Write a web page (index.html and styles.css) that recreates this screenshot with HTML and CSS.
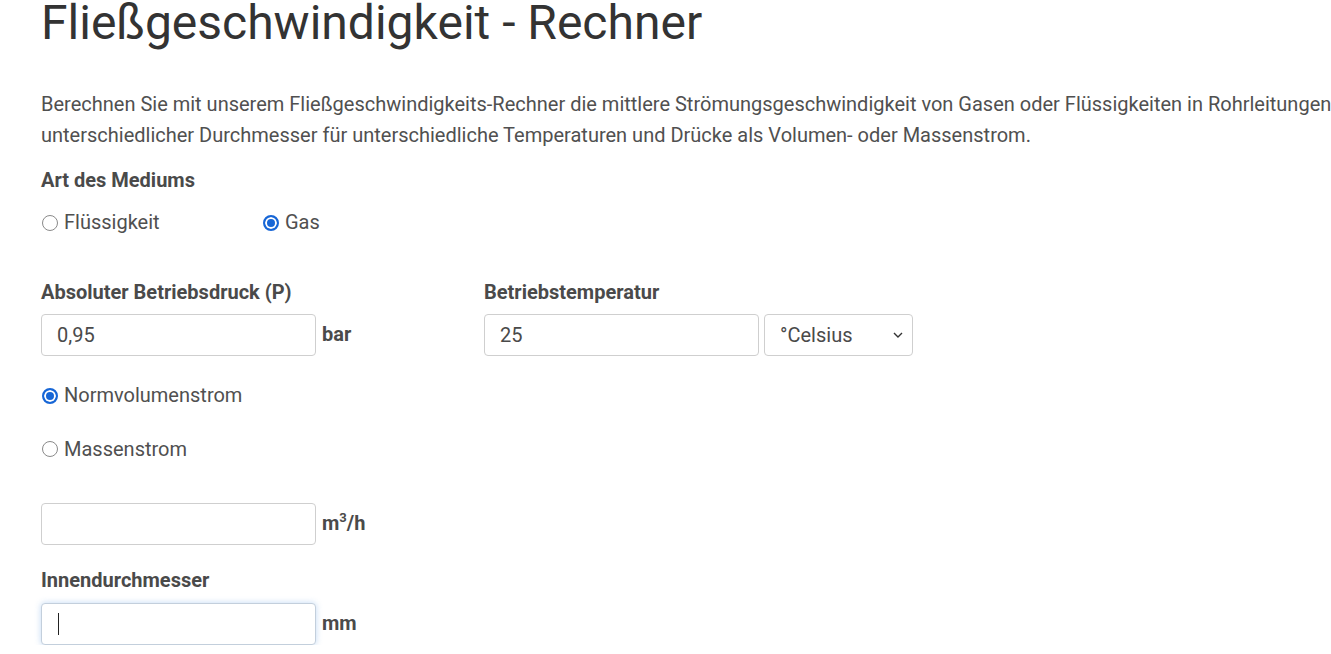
FILE: index.html
```html
<!DOCTYPE html>
<html lang="de">
<head>
  <meta charset="UTF-8">
  <meta name="viewport" content="width=device-width, initial-scale=1.0">
  <title>Fließgeschwindigkeit - Rechner</title>
  <link rel="stylesheet" href="styles.css">
</head>
<body>
  <div class="page">
    <h1>Fließgeschwindigkeit - Rechner</h1>
    <p class="intro">Berechnen Sie mit unserem Fließgeschwindigkeits-Rechner die mittlere Strömungsgeschwindigkeit von Gasen oder Flüssigkeiten in Rohrleitungen unterschiedlicher Durchmesser für unterschiedliche Temperaturen und Drücke als Volumen- oder Massenstrom.</p>

    <form class="calc">
      <div class="label medium-label">Art des Mediums</div>
      <div class="radio-row">
        <label class="radio radio-wide"><input type="radio" name="medium"> Flüssigkeit</label>
        <label class="radio"><input type="radio" name="medium" checked> Gas</label>
      </div>

      <div class="two-cols">
        <div class="field">
          <div class="label">Absoluter Betriebsdruck (P)</div>
          <div class="input-line">
            <input type="text" class="text-input" value="0,95">
            <span class="unit">bar</span>
          </div>
        </div>
        <div class="field">
          <div class="label">Betriebstemperatur</div>
          <div class="input-line">
            <input type="text" class="text-input" value="25">
            <div class="select-wrap">
              <select class="select">
                <option>°Celsius</option>
                <option>Kelvin</option>
              </select>
              <svg class="chevron" width="10" height="6" viewBox="0 0 10 6"><path d="M1 1l4 4 4-4" fill="none" stroke="#333" stroke-width="1.4"/></svg>
            </div>
          </div>
        </div>
      </div>

      <label class="radio radio-line first-flow"><input type="radio" name="flow" checked> Normvolumenstrom</label>
      <label class="radio radio-line"><input type="radio" name="flow"> Massenstrom</label>

      <div class="input-line flow-input">
        <input type="text" class="text-input">
        <span class="unit">m<sup>3</sup>/h</span>
      </div>

      <div class="label diameter-label">Innendurchmesser</div>
      <div class="input-line">
        <div class="focus-wrap">
          <input type="text" class="text-input focused">
          <span class="caret"></span>
        </div>
        <span class="unit">mm</span>
      </div>
    </form>
  </div>
</body>
</html>
```

FILE: styles.css
```css
/* Styles globaux */
body {
  margin: 0;
  padding: 0;
  background: #fff;
  font-family: Roboto, "Open Sans", Arial, sans-serif;
  font-size: 20px;
  line-height: 31.5px;
  color: #505050;
  overflow: hidden;
}

.page {
  padding-left: 41px;
  width: 1320px;
}

h1 {
  margin: -6px 0 0;
  font-size: 48px;
  font-weight: 400;
  line-height: 1.2;
  color: #333;
}

.intro {
  margin: 37px 0 0;
  width: 1300px;
}

.label {
  font-weight: 700;
  color: #4a4a4a;
}

.medium-label {
  margin-top: 13px;
}

.radio-row {
  display: flex;
  margin-top: 11px;
}

.radio {
  display: flex;
  align-items: center;
  gap: 6px;
}

.radio-wide {
  width: 221px;
}

.radio input {
  appearance: none;
  -webkit-appearance: none;
  box-sizing: border-box;
  width: 16px;
  height: 16px;
  margin: 0 0 0 1px;
  border: 1px solid #8a8a8a;
  border-radius: 50%;
  background: #fff;
}

.radio input:checked {
  border: 2px solid #1766d6;
  background: #1766d6;
  box-shadow: inset 0 0 0 2px #fff;
}

.two-cols {
  display: grid;
  grid-template-columns: 443px 443px;
  margin-top: 38px;
}

.input-line {
  display: flex;
  align-items: center;
  margin-top: 6px;
}

.text-input {
  box-sizing: border-box;
  width: 275px;
  height: 42px;
  padding: 0 15px;
  border: 1px solid #cfcfcf;
  border-radius: 4px;
  font-family: inherit;
  font-size: 20px;
  color: #4a4a4a;
  outline: none;
}

.unit {
  margin-left: 6px;
  font-weight: 700;
  color: #4a4a4a;
}

.unit sup {
  font-size: 13px;
  line-height: 0;
}

.select-wrap {
  position: relative;
  margin-left: 5px;
}

.select {
  appearance: none;
  -webkit-appearance: none;
  box-sizing: border-box;
  width: 149px;
  height: 42px;
  padding: 0 15px;
  border: 1px solid #cfcfcf;
  border-radius: 4px;
  background: #fff;
  font-family: inherit;
  font-size: 20px;
  color: #4a4a4a;
}

.chevron {
  position: absolute;
  right: 10px;
  top: 18px;
}

.first-flow {
  margin-top: 24px;
}

.radio-line + .radio-line {
  margin-top: 22px;
}

.flow-input {
  margin-top: 38px;
}

.diameter-label {
  margin-top: 20px;
}

.focus-wrap {
  position: relative;
}

.text-input.focused {
  border-color: #c3cfdc;
  box-shadow: 0 0 6px rgba(120, 170, 230, 0.45);
}

.caret {
  position: absolute;
  left: 17px;
  top: 10px;
  width: 1px;
  height: 22px;
  background: #222;
}
```
